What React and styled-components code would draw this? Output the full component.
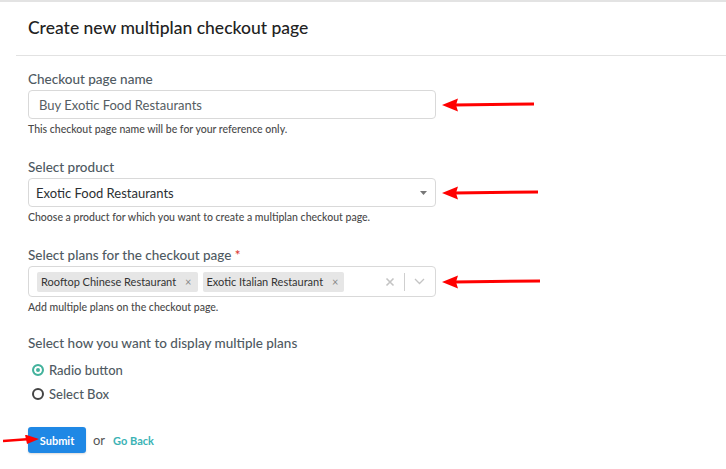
import React, { useState } from "react";
import styled, { createGlobalStyle } from "styled-components";

const GlobalStyle = createGlobalStyle`
	body {
		margin: 0;
		background: #fff;
		font-family: Lato, "Open Sans", "Liberation Sans", sans-serif;
	}
`;

export default function App() {
	const [display, setDisplay] = useState("radio");
	const plans = ["Rooftop Chinese Restaurant", "Exotic Italian Restaurant"];

	return (
		<Page>
			<GlobalStyle />
			<Card>
				<Header>
					<Title>Create new multiplan checkout page</Title>
				</Header>
				<Body>
					<Field>
						<Label>Checkout page name</Label>
						<Row>
							<Input defaultValue="Buy Exotic Food Restaurants" />
							<Arrow width={92} />
						</Row>
						<Help>This checkout page name will be for your reference only.</Help>
					</Field>

					<Field>
						<Label>Select product</Label>
						<Row>
							<SelectBox>
								<span>Exotic Food Restaurants</span>
								<Caret />
							</SelectBox>
							<Arrow width={96} />
						</Row>
						<Help>Choose a product for which you want to create a multiplan checkout page.</Help>
					</Field>

					<Field $gap={22}>
						<Label>
							Select plans for the checkout page <Required>*</Required>
						</Label>
						<Row>
							<MultiSelect>
								<Tags>
									{plans.map((p) => (
										<Tag key={p}>
											{p}
											<TagX>×</TagX>
										</Tag>
									))}
								</Tags>
								<Indicators>
									<svg width="10" height="10" viewBox="0 0 10 10">
										<path d="M1.5 1.5 L8.5 8.5 M8.5 1.5 L1.5 8.5" stroke="#c4c4c4" strokeWidth="1.6" />
									</svg>
									<Separator />
									<svg width="11" height="7" viewBox="0 0 11 7">
										<path d="M1 1 L5.5 5.5 L10 1" stroke="#c4c4c4" strokeWidth="1.3" fill="none" />
									</svg>
								</Indicators>
							</MultiSelect>
							<Arrow width={98} />
						</Row>
						<Help>Add multiple plans on the checkout page.</Help>
					</Field>

					<Options>
						<Label>Select how you want to display multiple plans</Label>
						<Option onClick={() => setDisplay("radio")}>
							<Radio checked={display === "radio"} />
							Radio button
						</Option>
						<Option onClick={() => setDisplay("select")}>
							<Radio checked={display === "select"} />
							Select Box
						</Option>
					</Options>

					<Actions>
						<SmallArrow>
							<svg width="36" height="10" viewBox="0 0 36 10">
								<path d="M0 6 L24 4.2" stroke="#f00" strokeWidth="2.4" />
								<path d="M36 4 L22 -0.5 L24 9 Z" fill="#f00" />
							</svg>
						</SmallArrow>
						<SubmitButton>Submit</SubmitButton>
						<Or>or</Or>
						<BackLink href="#">Go Back</BackLink>
					</Actions>
				</Body>
			</Card>
		</Page>
	);
}

function Arrow({ width }) {
	return (
		<ArrowWrap>
			<svg width={width} height="14" viewBox={`0 0 ${width} 14`}>
				<path d={`M12 7 L${width} 6`} stroke="#f00" strokeWidth="3" />
				<path d="M0 7 L16 0.5 L14 7 L16 13.5 Z" fill="#f00" />
			</svg>
		</ArrowWrap>
	);
}

function Caret() {
	return (
		<svg width="7" height="4" viewBox="0 0 7 4">
			<path d="M0 0 L7 0 L3.5 4 Z" fill="#777" />
		</svg>
	);
}

const Page = styled.div`
	width: 726px;
	height: 469px;
	overflow: hidden;
	border-top: 2px solid #e3e3e3;
	box-sizing: border-box;
`;

const Card = styled.div`
	margin-left: 16px;
`;

const Header = styled.div`
	height: 53px;
	border-bottom: 1px solid #e2e2e2;
	padding-left: 12px;
	display: flex;
	align-items: center;
`;

const Title = styled.h1`
	margin: 0 0 2px;
	font-size: 17.5px;
	font-weight: 500;
	color: #222;
`;

const Body = styled.div`
	padding: 15px 12px 0;
`;

const Field = styled.div`
	margin-bottom: ${(p) => p.$gap ?? 24}px;
`;

const Label = styled.div`
	font-size: 13.5px;
	font-weight: 500;
	color: #4f5a62;
	margin-bottom: 3px;
	line-height: 16px;
`;

const Required = styled.span`
	color: #d9342b;
`;

const Row = styled.div`
	display: flex;
	align-items: center;
`;

const Input = styled.input`
	width: 408px;
	height: 29px;
	box-sizing: border-box;
	border: 1px solid #d9d9d9;
	border-radius: 4px;
	padding: 0 10px;
	font-family: inherit;
	font-size: 13px;
	color: #555d63;
	outline: none;
`;

const SelectBox = styled.div`
	width: 408px;
	height: 29px;
	box-sizing: border-box;
	border: 1px solid #d9d9d9;
	border-radius: 4px;
	padding: 0 8px 0 7px;
	display: flex;
	align-items: center;
	justify-content: space-between;
	font-size: 13px;
	color: #2b2f33;
`;

const MultiSelect = styled.div`
	width: 408px;
	height: 31px;
	box-sizing: border-box;
	border: 1px solid #d9d9d9;
	border-radius: 4px;
	padding: 0 0 0 8px;
	display: flex;
	align-items: center;
	justify-content: space-between;
`;

const Tags = styled.div`
	display: flex;
	gap: 5px;
`;

const Tag = styled.div`
	background: #e6e6e6;
	border-radius: 2px;
	height: 20px;
	display: flex;
	align-items: center;
	padding: 0 6px 0 4px;
	font-size: 11px;
	color: #333;
	gap: 9px;
`;

const TagX = styled.span`
	color: #888;
	font-size: 11px;
`;

const Indicators = styled.div`
	display: flex;
	align-items: center;
	gap: 9px;
	padding-right: 10px;
`;

const Separator = styled.span`
	width: 1px;
	height: 18px;
	background: #cfcfcf;
`;

const ArrowWrap = styled.div`
	margin-left: 6px;
	display: flex;
`;

const Help = styled.div`
	font-size: 10.5px;
	font-weight: 500;
	color: #4a4a4a;
	margin-top: 4px;
`;

const Options = styled.div`
	display: flex;
	flex-direction: column;
	gap: 8px;
	& > ${Label} {
		margin-bottom: 3px;
	}
`;

const Option = styled.label`
	display: flex;
	align-items: center;
	gap: 5px;
	font-size: 13px;
	font-weight: 500;
	color: #4f5a62;
	padding-left: 4px;
	cursor: pointer;
`;

const Radio = styled.span`
	width: 12px;
	height: 12px;
	box-sizing: border-box;
	border-radius: 50%;
	border: 2px solid ${(p) => (p.checked ? "#43b29c" : "#444")};
	background: ${(p) => (p.checked ? "#43b29c" : "#fff")};
	box-shadow: ${(p) => (p.checked ? "inset 0 0 0 2px #fff" : "none")};
`;

const Actions = styled.div`
	margin-top: 25px;
	display: flex;
	align-items: center;
	position: relative;
`;

const SmallArrow = styled.div`
	position: absolute;
	left: -25px;
	top: 8px;
	display: flex;
`;

const SubmitButton = styled.button`
	background: #1f88e5;
	color: #fff;
	border: none;
	border-radius: 3px;
	height: 26px;
	width: 58px;
	font-family: inherit;
	font-size: 11px;
	font-weight: 700;
	box-shadow: 0 1px 2px rgba(0, 0, 0, 0.15);
`;

const Or = styled.span`
	font-size: 13px;
	color: #555;
	margin: 0 8px 0 7px;
`;

const BackLink = styled.a`
	font-size: 11px;
	font-weight: 700;
	color: #3bb3b5;
	text-decoration: none;
`;
